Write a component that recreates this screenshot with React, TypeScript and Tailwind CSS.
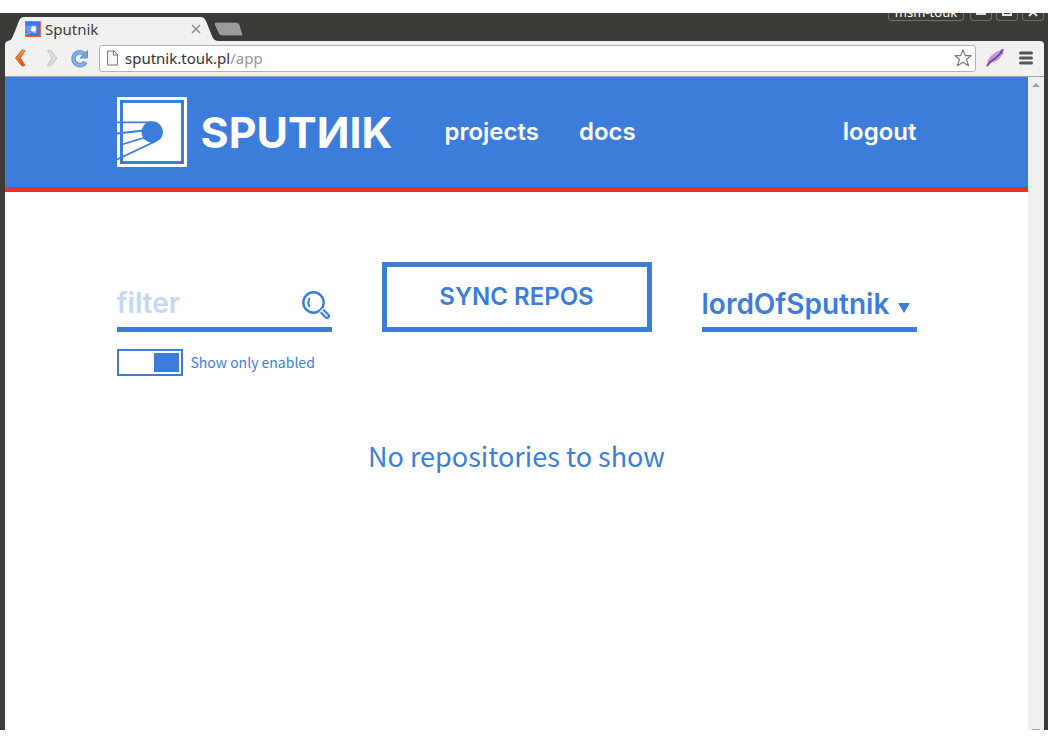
import { useState } from "react";

function Wordmark() {
  return (
    <span className="font-['Inter',sans-serif] text-[43px] font-bold leading-[44px] text-white">
      SPUTИIK
    </span>
  );
}

function SputnikMark() {
  return (
    <svg viewBox="0 0 70 70" className="size-[70px] shrink-0" aria-hidden="true">
      <rect width="70" height="70" fill="#fff" />
      <rect x="4.5" y="4.5" width="61" height="61" fill="none" stroke="#3c7ddc" strokeWidth="3" />
      <circle cx="35.2" cy="35" r="10.7" fill="#3c7ddc" />
      <path d="M0 25.3H35M0 36.500L27 33.500M5 47.500L28 40.500M0 62.500L38 44.500" fill="none" stroke="#3c7ddc" strokeWidth="1.800" />
    </svg>
  );
}

function Favicon() {
  return (
    <svg viewBox="0 0 16 16" className="size-4 shrink-0" aria-hidden="true">
      <rect x=".5" y=".5" width="15" height="15" fill="#3c7ddc" stroke="#f0604f" />
      <path d="M1 6H8M1 8L6 8M2 10.500L7 9M1 13L9 10" stroke="#a9c8f3" strokeWidth=".8" />
      <path d="M6 4.500H11.500V12H7L9 10Z" fill="#c4daf8" opacity=".6" />
      <circle cx="8.500" cy="8" r="2.500" fill="#fff" />
    </svg>
  );
}

function TabStrip() {
  return (
    <div className="flex h-7 items-start justify-between overflow-hidden bg-[#3c3b37]">
      <div className="flex h-7 items-end">
        <div className="relative h-6 w-[216px]">
          <svg viewBox="0 0 216 24" className="absolute inset-0 h-6 w-[216px]" aria-hidden="true">
            <path d="M0 24C6 24 6 23 8 19L14 4Q15.500 0 19 0H196Q199 0 201 4L207 19Q208.500 24 214 24Z" fill="#f2f1f0" />
          </svg>
          <div className="relative flex h-6 items-center gap-1 pl-5 pr-5">
            <Favicon />
            <span className="grow font-['Noto_Sans',sans-serif] text-[15px] leading-5 text-[#3c3b37]">Sputnik</span>
            <button type="button" aria-label="Close tab">
              <svg viewBox="0 0 10 10" className="size-[10px]" aria-hidden="true">
                <path d="M1 1L9 9M9 1L1 9" stroke="#8b8985" strokeWidth="1.500" />
              </svg>
            </button>
          </div>
        </div>
        <button type="button" aria-label="New tab" className="-ml-2 self-start pt-2">
          <svg viewBox="0 0 32 16" className="h-4 w-8" aria-hidden="true">
            <path d="M3 1H23Q26 1 27 4L30.500 15H9Q6 15 5 12L1 3Q1 1 3 1Z" fill="#9c9a98" stroke="#2c2b28" />
          </svg>
        </button>
      </div>
      <div className="flex gap-1 text-white">
        <div className="mr-[2px] h-2 w-[76px] overflow-hidden rounded-b border border-t-0 border-[#72716c] text-center font-['Noto_Sans',sans-serif] text-[13px]">
          <span className="-mt-[7px] block leading-3">msm-touk</span>
        </div>
        <button type="button" aria-label="Minimize" className="h-2 w-[22px] rounded-b border border-t-0 border-[#72716c]">
          <svg viewBox="0 0 20 7" className="block h-[7px] w-5" aria-hidden="true"><path d="M5 0H15V2H5Z" fill="#e5e4e0" /></svg>
        </button>
        <button type="button" aria-label="Maximize" className="h-2 w-[22px] rounded-b border border-t-0 border-[#72716c]">
          <svg viewBox="0 0 20 7" className="block h-[7px] w-5" aria-hidden="true"><path d="M6 0V2H14V0" fill="none" stroke="#e5e4e0" strokeWidth="2" /></svg>
        </button>
        <button type="button" aria-label="Close window" className="h-2 w-[22px] rounded-b border border-t-0 border-[#72716c]">
          <svg viewBox="0 0 20 7" className="block h-[7px] w-5" aria-hidden="true"><path d="M6 3L10 -1L14 3" fill="none" stroke="#e5e4e0" strokeWidth="2" /></svg>
        </button>
      </div>
    </div>
  );
}

function Toolbar() {
  return (
    <div className="bg-[#3c3b37]">
      <div className="flex h-9 items-center rounded-t border-b border-[#a8a6a2] bg-[#f2f1f0] pb-px pl-2 pr-[11px]">
        <button type="button" aria-label="Back" className="mr-[18px]">
          <svg viewBox="0 0 14 20" className="h-5 w-[14px]" aria-hidden="true">
            <defs>
              <linearGradient id="back" x1="0" y1="0" x2="0" y2="1">
                <stop offset="0" stopColor="#f3a45c" />
                <stop offset="1" stopColor="#dd4814" />
              </linearGradient>
            </defs>
            <path d="M9 2L12 2.500L7.500 10L12 17.500L9 18L2.500 10Z" fill="url(#back)" stroke="#d2602b" strokeWidth="1" strokeLinejoin="round" />
          </svg>
        </button>
        <button type="button" aria-label="Forward" className="mr-[10px]">
          <svg viewBox="0 0 14 20" className="h-5 w-[14px]" aria-hidden="true">
            <path d="M5.500 2L2.500 2.500L7 10L2.500 17.500L5.500 18L12 10Z" fill="#dedcda" stroke="#c9c7c4" strokeLinejoin="round" />
          </svg>
        </button>
        <button type="button" aria-label="Reload" className="mr-2">
          <svg viewBox="0 0 22 22" className="size-[22px]" aria-hidden="true">
            <path d="M16.500 15A6.500 6.500 0 1 1 15.500 7" fill="none" stroke="#5f96cb" strokeWidth="4.500" />
            <path d="M16.500 15A6.500 6.500 0 1 1 15.500 7" fill="none" stroke="#83b2df" strokeWidth="2.500" />
            <path d="M18.500 3.500V11H11Z" fill="#70a5d8" stroke="#5f96cb" />
          </svg>
        </button>
        <div className="flex h-[27px] min-w-0 grow items-center gap-[6px] rounded-[3px] border border-[#b4b2ae] bg-white px-[6px]">
          <svg viewBox="0 0 13 16" className="h-4 w-[13px] shrink-0" aria-hidden="true">
            <path d="M1.500 1H8L11.500 4.500V15H1.500Z" fill="#f6f6f6" stroke="#777" strokeLinejoin="round" />
            <path d="M7.500 1V5H11.500" fill="none" stroke="#777" />
          </svg>
          <div className="min-w-0 grow font-['Noto_Sans',sans-serif] text-[15px] leading-5 text-[#333]">
            sputnik.touk.pl<span className="text-[#999]">/app</span>
          </div>
          <button type="button" aria-label="Bookmark this page" className="-mr-1">
            <svg viewBox="0 0 20 20" className="size-5" aria-hidden="true">
              <path d="M10 1.800L12.300 7.600H18L13.600 11.300L15.500 17.700L10 14.200L4.500 17.700L6.400 11.300L2 7.600H7.700Z" fill="#fff" stroke="#777" strokeWidth="1.200" strokeLinejoin="round" />
            </svg>
          </button>
        </div>
        <button type="button" aria-label="Feather extension" className="ml-[9px]">
          <svg viewBox="0 0 20 20" className="size-5" aria-hidden="true">
            <path d="M2 17Q2 11 7 7Q12 3 18 1Q18 8 13 12Q8 15 5 15L2 19Z" fill="#b99ad6" />
            <path d="M17.500 1.500Q15 7 10 10.500Q5 13 2 18" fill="none" stroke="#7b35a5" strokeWidth="1.600" />
            <path d="M18 1L16.500 6.500" stroke="#a83fc4" strokeWidth="1.500" />
          </svg>
        </button>
        <button type="button" aria-label="Menu" className="ml-[14px]">
          <svg viewBox="0 0 14 14" className="size-[14px]" aria-hidden="true">
            <path d="M1.500 2H12.500M1.500 7H12.500M1.500 12H12.500" stroke="#555" strokeWidth="3" strokeLinecap="round" />
          </svg>
        </button>
      </div>
    </div>
  );
}

function SiteHeader() {
  return (
    <header className="border-b-[5px] border-[#e83323] bg-[#3c7ddc]">
      <div className="mx-auto flex h-[110px] w-full max-w-[800px] items-center">
        <a href="#home" aria-label="Sputnik" className="flex items-center gap-[14px]">
          <SputnikMark />
          <Wordmark />
        </a>
        <nav className="ml-[52px] flex grow items-center gap-10 font-['Inter',sans-serif] text-2xl font-semibold text-white">
          <a href="#projects">projects</a>
          <a href="#docs">docs</a>
          <a href="#logout" className="ml-auto">logout</a>
        </nav>
      </div>
    </header>
  );
}

function FilterBar() {
  const [filter, setFilter] = useState("");
  const [enabledOnly, setEnabledOnly] = useState(true);
  return (
    <div className="grid grid-cols-[215fr_270fr_215fr] items-end gap-x-[50px] font-['Inter',sans-serif] text-[#3c7ddc]">
      <div className="flex h-[70px] items-end border-b-[5px] border-[#3c7ddc] pb-1">
        <input
          type="text"
          aria-label="filter"
          placeholder="filter"
          value={filter}
          onChange={(e) => setFilter(e.target.value)}
          className="h-10 w-full min-w-0 text-[28px] font-semibold outline-none placeholder:text-[#c4d8f5]"
        />
        <svg viewBox="0 0 30 30" className="mr-px mb-[3px] size-[30px] shrink-0" aria-hidden="true">
          <circle cx="12.500" cy="12.500" r="10.200" fill="none" stroke="#3c7ddc" strokeWidth="2.400" />
          <path d="M8.700 8Q5.800 12.500 8.700 17" fill="none" stroke="#3c7ddc" strokeWidth="2" />
          <path d="M21.500 21.500L26 26" stroke="#3c7ddc" strokeWidth="6" strokeLinecap="round" />
          <path d="M21.500 21.500L26 26" stroke="#fff" strokeWidth="1.600" strokeLinecap="round" />
          <path d="M18.500 22.500L22.500 18.500" stroke="#fff" strokeWidth="1.200" />
        </svg>
      </div>
      <button type="button" className="h-[70px] border-[5px] border-[#3c7ddc] text-2xl font-semibold">
        SYNC REPOS
      </button>
      <div className="flex h-[70px] items-end border-b-[5px] border-[#3c7ddc] pb-1">
        <select aria-label="Account" className="h-10 appearance-none text-[28px] font-semibold outline-none">
          <option>lordOfSputnik</option>
        </select>
        <svg viewBox="0 0 12 10" className="mb-[10px] ml-2 h-[10px] w-3 shrink-0" aria-hidden="true">
          <path d="M0 0H12L6 10Z" fill="#3c7ddc" />
        </svg>
      </div>
      <label className="mt-[17px] flex items-center gap-2 font-['Noto_Sans_CJK_SC',sans-serif] text-sm leading-[27px]">
        <input
          type="checkbox"
          checked={enabledOnly}
          onChange={(e) => setEnabledOnly(e.target.checked)}
          className="flex h-[27px] w-[66px] shrink-0 appearance-none border-2 border-[#3c7ddc] p-[2px] before:h-[19px] before:w-[25px] before:bg-[#3c7ddc] checked:justify-end"
        />
        <span className="whitespace-nowrap">Show only enabled</span>
      </label>
    </div>
  );
}

export default function App() {
  return (
    <div className="flex min-h-screen flex-col bg-white py-[13px]">
      <div className="flex grow flex-col border-r-4 border-l-[5px] border-[#3c3b37]">
        <TabStrip />
        <Toolbar />
        <div className="flex grow">
          <div className="flex min-w-0 grow flex-col">
            <SiteHeader />
            <main className="mx-auto w-full max-w-[800px] pt-[70px]">
              <FilterBar />
              <p className="mt-[58px] text-center font-['Noto_Sans_CJK_SC',sans-serif] text-[27px] leading-[44px] text-[#3c7ddc]">
                No repositories to show
              </p>
            </main>
          </div>
          <div className="flex w-4 shrink-0 flex-col items-center justify-between bg-[#f0f0f0] pt-[6px]" aria-hidden="true">
            <svg viewBox="0 0 8 4" className="h-1 w-2"><path d="M0 4L4 0L8 4Z" fill="#a3a3a3" /></svg>
            <svg viewBox="0 0 8 1" className="h-px w-2"><path d="M0 0H8V1H0Z" fill="#a3a3a3" /></svg>
          </div>
        </div>
      </div>
    </div>
  );
}
